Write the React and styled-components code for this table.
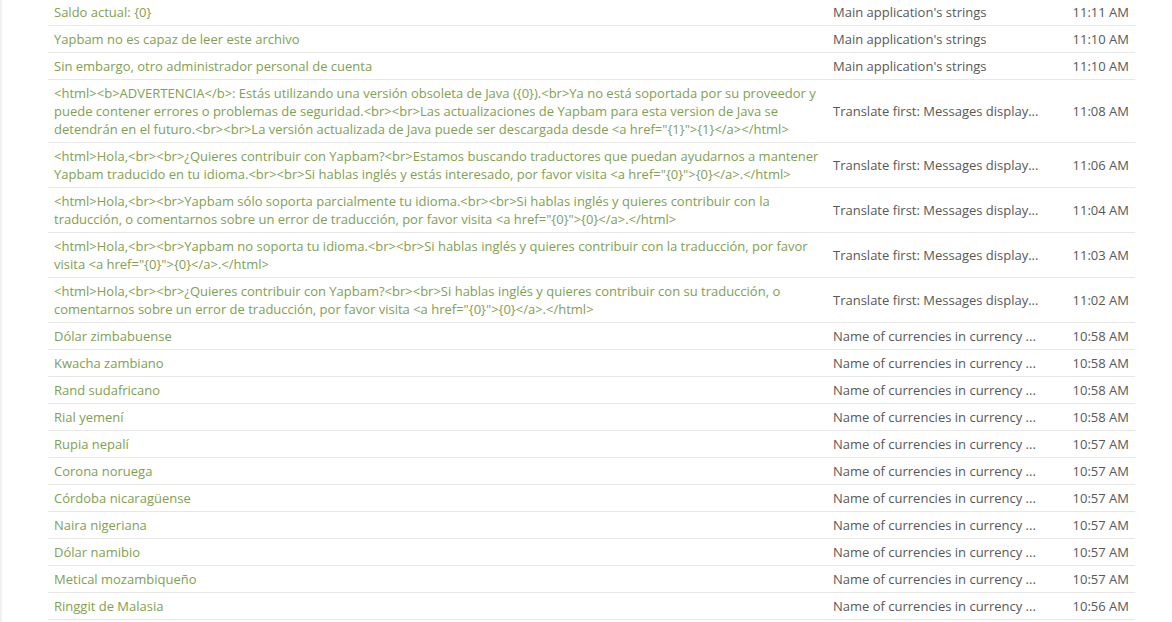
import React from 'react'
import styled, { createGlobalStyle } from 'styled-components'

const GlobalStyle = createGlobalStyle`
  html, body {
    margin: 0;
    padding: 0;
    background: #fff;
    font-family: 'Open Sans', 'Liberation Sans', sans-serif;
    overflow: hidden;
  }
`

const Page = styled.div`
  display: flex;
  min-height: 622px;
`

const SideEdge = styled.div`
  flex: 0 0 2px;
  background: #f2f2f2;
`

const Main = styled.div`
  flex: 1 1 auto;
  padding: 0 37px 0 46px;
`

const Table = styled.table`
  width: 100%;
  margin-top: -1px;
  border-collapse: collapse;
  table-layout: fixed;
  font-size: 13px;
  line-height: 18px;
`

const Row = styled.tr`
  border-bottom: 1px solid #e8e8e8;
`

const Cell = styled.td`
  padding: 4px 6px;
  vertical-align: middle;
  color: ${p => (p.$accent ? '#82a052' : '#585858')};
  text-align: ${p => (p.$right ? 'right' : 'left')};
  white-space: ${p => (p.$nowrap ? 'nowrap' : 'normal')};
  overflow: hidden;
  text-overflow: ellipsis;
`

const rows = [
  ['Saldo actual: {0}', "Main application's strings", '11:11 AM'],
  ['Yapbam no es capaz de leer este archivo', "Main application's strings", '11:10 AM'],
  ['Sin embargo, otro administrador personal de cuenta', "Main application's strings", '11:10 AM'],
  ['<html><b>ADVERTENCIA</b>: Estás utilizando una versión obsoleta de Java ({0}).<br>Ya no está soportada por su proveedor y puede contener errores o problemas de seguridad.<br><br>Las actualizaciones de Yapbam para esta version de Java se detendrán en el futuro.<br><br>La versión actualizada de Java puede ser descargada desde <a href="{1}">{1}</a></html>', 'Translate first: Messages display...', '11:08 AM'],
  ['<html>Hola,<br><br>¿Quieres contribuir con Yapbam?<br>Estamos buscando traductores que puedan ayudarnos a mantener Yapbam traducido en tu idioma.<br><br>Si hablas inglés y estás interesado, por favor visita <a href="{0}">{0}</a>.</html>', 'Translate first: Messages display...', '11:06 AM'],
  ['<html>Hola,<br><br>Yapbam sólo soporta parcialmente tu idioma.<br><br>Si hablas inglés y quieres contribuir con la traducción, o comentarnos sobre un error de traducción, por favor visita <a href="{0}">{0}</a>.</html>', 'Translate first: Messages display...', '11:04 AM'],
  ['<html>Hola,<br><br>Yapbam no soporta tu idioma.<br><br>Si hablas inglés y quieres contribuir con la traducción, por favor visita <a href="{0}">{0}</a>.</html>', 'Translate first: Messages display...', '11:03 AM'],
  ['<html>Hola,<br><br>¿Quieres contribuir con Yapbam?<br><br>Si hablas inglés y quieres contribuir con su traducción, o comentarnos sobre un error de traducción, por favor visita <a href="{0}">{0}</a>.</html>', 'Translate first: Messages display...', '11:02 AM'],
  ['Dólar zimbabuense', 'Name of currencies in currency ...', '10:58 AM'],
  ['Kwacha zambiano', 'Name of currencies in currency ...', '10:58 AM'],
  ['Rand sudafricano', 'Name of currencies in currency ...', '10:58 AM'],
  ['Rial yemení', 'Name of currencies in currency ...', '10:58 AM'],
  ['Rupia nepalí', 'Name of currencies in currency ...', '10:57 AM'],
  ['Corona noruega', 'Name of currencies in currency ...', '10:57 AM'],
  ['Córdoba nicaragüense', 'Name of currencies in currency ...', '10:57 AM'],
  ['Naira nigeriana', 'Name of currencies in currency ...', '10:57 AM'],
  ['Dólar namibio', 'Name of currencies in currency ...', '10:57 AM'],
  ['Metical mozambiqueño', 'Name of currencies in currency ...', '10:57 AM'],
  ['Ringgit de Malasia', 'Name of currencies in currency ...', '10:56 AM'],
]

const App = () => (
  <Page>
    <GlobalStyle />
    <SideEdge />
    <Main>
      <Table>
        <colgroup>
          <col style={{ width: 779 }} />
          <col style={{ width: 218 }} />
          <col style={{ width: 90 }} />
        </colgroup>
        <tbody>
          {rows.map(([text, group, time], i) => (
            <Row key={i}>
              <Cell $accent>{text}</Cell>
              <Cell $nowrap>{group}</Cell>
              <Cell $nowrap $right>{time}</Cell>
            </Row>
          ))}
        </tbody>
      </Table>
    </Main>
  </Page>
)

export default App
